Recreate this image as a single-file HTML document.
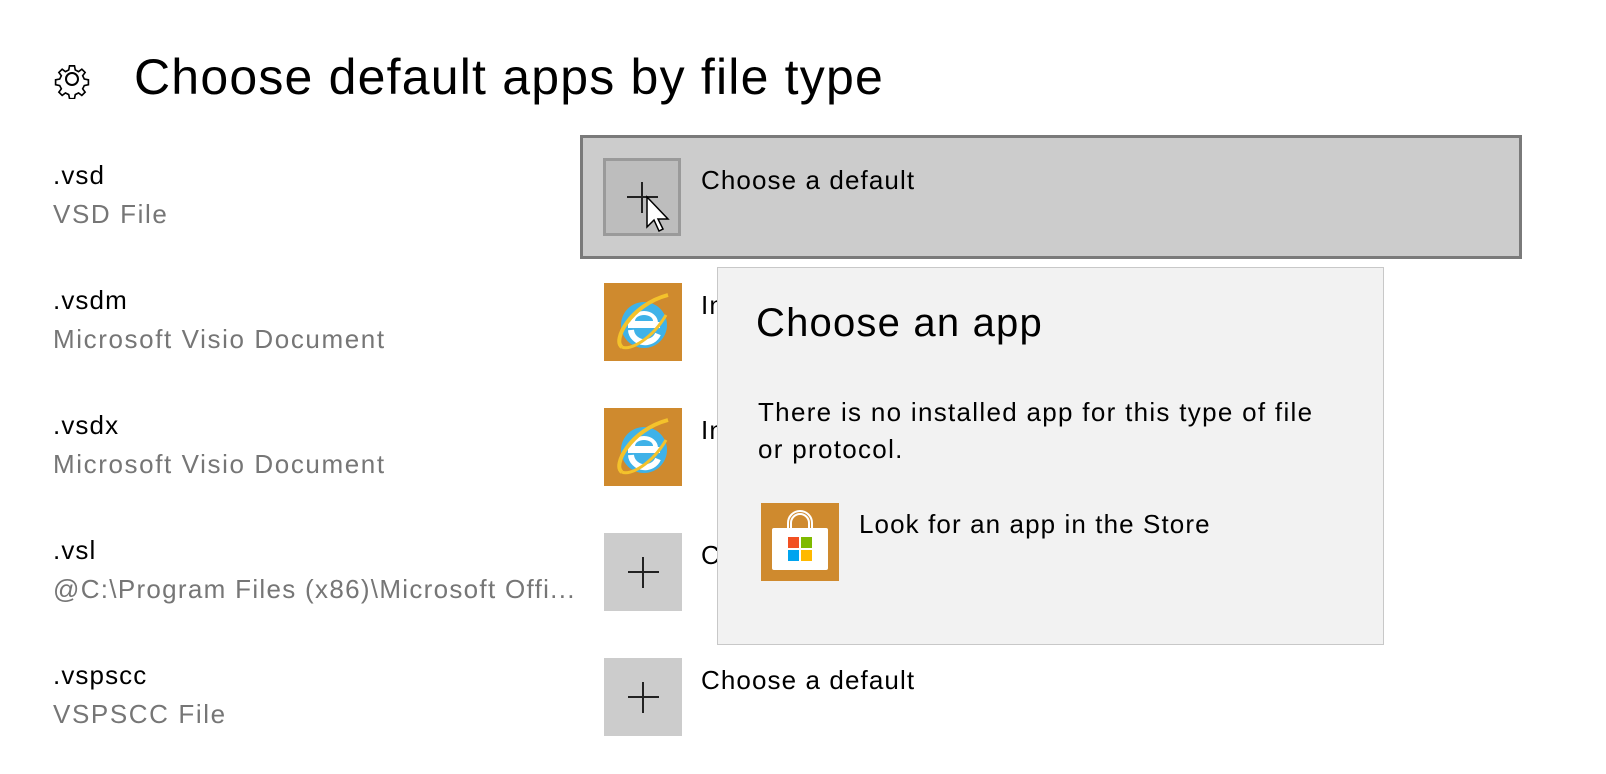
<!DOCTYPE html>
<html><head><style>
body{margin:0;width:1606px;height:774px;background:#fff;font-family:"Liberation Sans",sans-serif;position:relative;overflow:hidden;color:#000}
.a{position:absolute;white-space:nowrap}
.ext{font-size:26px;letter-spacing:1.1px}
.sub{font-size:26px;letter-spacing:1.6px;color:#767676}
.tile{position:absolute;width:78px;height:78px;background:#cccccc}
.ie{background:#cf8a2e}
.plus{position:absolute;left:24px;top:38px;width:31px;height:2px;background:#222}
.plusv{position:absolute;left:38px;top:24px;width:2px;height:31px;background:#222}
</style></head><body>
<svg class="a" style="left:52px;top:59px" width="40" height="40" viewBox="0 0 40 40"><g fill="none" stroke="#000" stroke-width="2"><circle cx="20" cy="20" r="6"/><path d="M17 4h6l1 5 4 2 4-3 4 4-3 4 2 4 5 1v6l-5 1-2 4 3 4-4 4-4-3-4 2-1 5h-6l-1-5-4-2-4 3-4-4 3-4-2-4-5-1v-6l5-1 2-4-3-4 4-4 4 3 4-2z" transform="translate(20 20) scale(.82) translate(-20 -20)"/></g></svg>
<div class="a" style="left:134px;top:48px;font-size:50px;letter-spacing:1.2px">Choose default apps by file type</div>

<div class="a ext" style="left:53px;top:160px">.vsd</div><div class="a sub" style="left:53px;top:199px">VSD File</div>
<div class="a ext" style="left:53px;top:285px">.vsdm</div><div class="a sub" style="left:53px;top:324px">Microsoft Visio Document</div>
<div class="a ext" style="left:53px;top:410px">.vsdx</div><div class="a sub" style="left:53px;top:449px">Microsoft Visio Document</div>
<div class="a ext" style="left:53px;top:535px">.vsl</div><div class="a sub" style="left:53px;top:574px;letter-spacing:1.3px">@C:\Program Files (x86)\Microsoft Offi...</div>
<div class="a ext" style="left:53px;top:660px">.vspscc</div><div class="a sub" style="left:53px;top:699px">VSPSCC File</div>

<div class="a" style="left:580px;top:135px;width:936px;height:118px;background:#cccccc;border:3px solid #7a7a7a"></div>
<div class="tile" style="left:603px;top:158px;width:72px;height:72px;background:#bdbdbd;border:3px solid #9a9a9a"><div class="plus" style="left:21px;top:35px"></div><div class="plusv" style="left:35px;top:21px"></div></div>
<svg class="a" style="left:645px;top:195px" width="28" height="40" viewBox="0 0 28 40"><path d="M2 2v30l7-7 5 11 4-2-5-10h10z" fill="#fff" stroke="#000" stroke-width="1.5"/></svg>
<div class="a ext" style="left:701px;top:165px">Choose a default</div>

<div class="tile ie" style="left:604px;top:283px"><svg width="78" height="78" viewBox="0 0 78 78"><circle cx="40" cy="42" r="23" fill="#3fb2e8"/><path d="M26 40a14 12 0 0 1 28 0z" fill="#fff"/><path d="M31 38a9 6 0 0 1 18 0z" fill="#3fb2e8"/><rect x="24" y="39" width="32" height="6" fill="#fff"/><path d="M27 47a14 13 0 0 0 27 4" fill="none" stroke="#fff" stroke-width="6"/><path d="M18 64C8 58 26 22 64 12" fill="none" stroke="#f4c22b" stroke-width="4"/><path d="M18 64c8 4 30-8 44-32" fill="none" stroke="#f4c22b" stroke-width="3"/></svg></div>
<div class="a ext" style="left:701px;top:290px">In</div>
<div class="tile ie" style="left:604px;top:408px"><svg width="78" height="78" viewBox="0 0 78 78"><circle cx="40" cy="42" r="23" fill="#3fb2e8"/><path d="M26 40a14 12 0 0 1 28 0z" fill="#fff"/><path d="M31 38a9 6 0 0 1 18 0z" fill="#3fb2e8"/><rect x="24" y="39" width="32" height="6" fill="#fff"/><path d="M27 47a14 13 0 0 0 27 4" fill="none" stroke="#fff" stroke-width="6"/><path d="M18 64C8 58 26 22 64 12" fill="none" stroke="#f4c22b" stroke-width="4"/><path d="M18 64c8 4 30-8 44-32" fill="none" stroke="#f4c22b" stroke-width="3"/></svg></div>
<div class="a ext" style="left:701px;top:415px">In</div>
<div class="tile" style="left:604px;top:533px"><div class="plus"></div><div class="plusv"></div></div>
<div class="a ext" style="left:701px;top:540px">C</div>
<div class="tile" style="left:604px;top:658px"><div class="plus"></div><div class="plusv"></div></div>
<div class="a ext" style="left:701px;top:665px">Choose a default</div>

<div class="a" style="left:717px;top:267px;width:665px;height:376px;background:#f2f2f2;border:1px solid #c8c8c8"></div>
<div class="a" style="left:756px;top:301px;font-size:40px;letter-spacing:1.2px">Choose an app</div>
<div class="a" style="left:758px;top:394px;font-size:26px;letter-spacing:1.3px;line-height:37px">There is no installed app for this type of file<br>or protocol.</div>
<div class="tile" style="left:761px;top:503px;background:#cf8a2e"><svg width="78" height="78" viewBox="0 0 78 78"><path d="M30 26v-6a9 9 0 0 1 18 0v6M27 26v-6a12 12 0 0 1 24 0v6" fill="none" stroke="#fff" stroke-width="2"/><rect x="11" y="25" width="56" height="42" rx="2" fill="#fff"/><rect x="27" y="34" width="11" height="11" fill="#f25022"/><rect x="40" y="34" width="11" height="11" fill="#7fba00"/><rect x="27" y="47" width="11" height="11" fill="#00a4ef"/><rect x="40" y="47" width="11" height="11" fill="#ffb900"/></svg></div>
<div class="a ext" style="left:859px;top:509px">Look for an app in the Store</div>
</body></html>
